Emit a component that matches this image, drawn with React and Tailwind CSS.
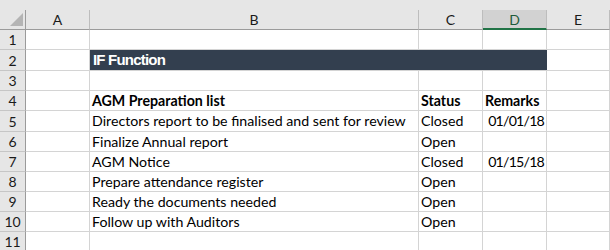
import React from "react";

const cols = ["A", "B", "C", "D", "E"];
const rows = [
  { h: "h-[20px]", b: "", c: "", d: "" },
  { h: "h-[21px]", band: true },
  { h: "h-[20px]", b: "", c: "", d: "" },
  { h: "h-[20px]", b: "AGM Preparation list", c: "Status", d: "Remarks", bold: true },
  { h: "h-[21px]", b: "Directors report to be finalised and sent for review", c: "Closed", d: "01/01/18" },
  { h: "h-[20px]", b: "Finalize Annual report", c: "Open", d: "" },
  { h: "h-[20px]", b: "AGM Notice", c: "Closed", d: "01/15/18" },
  { h: "h-[20px]", b: "Prepare attendance register", c: "Open", d: "" },
  { h: "h-[20px]", b: "Ready the documents needed", c: "Open", d: "" },
  { h: "h-[20px]", b: "Follow up with Auditors", c: "Open", d: "" },
  { h: "h-[20px]", b: "", c: "", d: "" },
];

const cell = "border-r border-b border-[#d4d4d4] flex items-center overflow-hidden whitespace-nowrap";

export default function App() {
  return (
    <div
      className="w-[610px] h-[250px] overflow-hidden bg-white text-black"
      style={{ fontFamily: "Lato, 'Open Sans', sans-serif" }}
    >
      <div className="h-[10px] bg-[#e6e6e6]" />
      <div className="grid grid-cols-[26px_64px_329px_64px_64px_1fr]">
        {/* header row */}
        <div className="h-[20px] bg-[#e6e6e6] border-r border-b border-[#9b9b9b] relative">
          <div className="absolute left-[10px] top-[3px] w-0 h-0 border-l-[13px] border-l-transparent border-b-[13px] border-b-[#b4b4b4]" />
        </div>
        {cols.map((c) =>
          c === "D" ? (
            <div
              key={c}
              className="h-[20px] bg-[#d2d2d2] border-r border-[#bdbdbd] border-b-2 border-b-[#217346] flex items-center justify-center text-[14px] text-[#1e5c3a]"
            >
              {c}
            </div>
          ) : (
            <div
              key={c}
              className="h-[20px] bg-[#e6e6e6] border-r border-[#bdbdbd] border-b border-b-[#9b9b9b] flex items-center justify-center text-[14px] text-[#1a1a1a]"
            >
              {c}
            </div>
          )
        )}
        {rows.map((r, i) => (
          <React.Fragment key={i}>
            <div
              className={`${r.h} bg-[#e6e6e6] border-r border-r-[#9b9b9b] border-b border-b-[#c6c6c6] flex items-center justify-center text-[14px] text-[#1a1a1a]`}
            >
              {i + 1}
            </div>
            <div className={`${r.h} ${cell}`} />
            {r.band ? (
              <div
                className={`${r.h} col-span-3 bg-[#333f4f] border-b border-[#d4d4d4] flex items-center pl-[3px] text-white font-bold text-[15px] tracking-[-0.8px]`}
                style={{ fontFamily: "'Liberation Sans', Arial, sans-serif" }}
              >
                IF Function
              </div>
            ) : (
              <>
                <div className={`${r.h} ${cell} pl-[2px] text-[14.2px] ${r.bold ? "font-bold" : ""}`}>{r.b}</div>
                <div className={`${r.h} ${cell} pl-[2px] text-[14.2px] ${r.bold ? "font-bold" : ""}`}>{r.c}</div>
                <div
                  className={`${r.h} ${cell} text-[14.2px] ${r.bold ? "font-bold pl-[2px]" : "justify-end pr-[2px] tracking-[-0.8px]"}`}
                >
                  {r.d}
                </div>
              </>
            )}
            <div className={`${r.h} ${cell}`} />
          </React.Fragment>
        ))}
      </div>
    </div>
  );
}
